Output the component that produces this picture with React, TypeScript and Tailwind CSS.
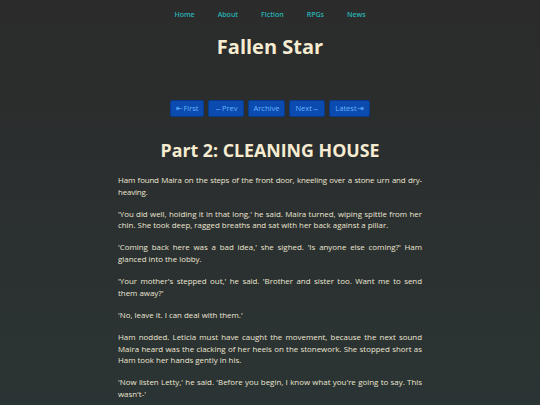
const links = ["Home", "About", "Fiction", "RPGs", "News"];

const pager = ["⇤First", "←Prev", "Archive", "Next→", "Latest⇥"];

const paragraphs = [
  "'You did well, holding it in that long,' he said. Maira turned, wiping spittle from her chin. She took deep, ragged breaths and sat with her back against a pillar.",
  "'Coming back here was a bad idea,' she sighed. 'Is anyone else coming?' Ham glanced into the lobby.",
  "'Your mother's stepped out,' he said. 'Brother and sister too. Want me to send them away?'",
  "'No, leave it. I can deal with them.'",
  "Ham nodded. Leticia must have caught the movement, because the next sound Maira heard was the clacking of her heels on the stonework. She stopped short as Ham took her hands gently in his.",
  "'Now listen Letty,' he said. 'Before you begin, I know what you're going to say. This wasn't-'",
];

export default function App() {
  return (
    <div
      className="w-[540px] h-[405px] overflow-hidden bg-gradient-to-b from-[#2b2b2b] to-[#2b3434] text-[#ece6d2]"
      style={{ fontFamily: '"Open Sans", "Noto Sans", sans-serif' }}
    >
      <nav className="flex justify-center gap-[23px] pt-[10px] text-[7px] leading-[10px] font-semibold text-[#29b3b5]">
        {links.map((l) => (
          <a key={l} href="#">
            {l}
          </a>
        ))}
      </nav>

      <h1 className="mt-[14px] text-center text-[20px] leading-[26px] font-bold text-[#f6ecd2]">
        Fallen Star
      </h1>

      <div className="mt-[40px] flex justify-center gap-[4px]">
        {pager.map((p) => (
          <button
            key={p}
            className="h-[17px] px-[5px] rounded-[2px] bg-[#0b4aae] border border-[#083a8a] text-[7.5px] leading-[15px] text-[#66b6ff]"
          >
            {p}
          </button>
        ))}
      </div>

      <h2 className="mt-[21px] text-center text-[17.8px] leading-[24px] font-bold text-[#f6ecd2]">
        Part 2: CLEANING HOUSE
      </h2>

      <div className="mx-auto mt-[13px] w-[304px] flex flex-col gap-[10.3px] text-[7.9px] leading-[11.7px] text-justify">
        {/* opening paragraph set a touch tighter so the hyphenated word splits */}
        <p className="tracking-[-0.15px]">
          Ham found Maira on the steps of the front door, kneeling over a stone urn and dry-heaving.
        </p>
        {paragraphs.map((t, i) => (
          <p key={i}>{t}</p>
        ))}
      </div>
    </div>
  );
}
